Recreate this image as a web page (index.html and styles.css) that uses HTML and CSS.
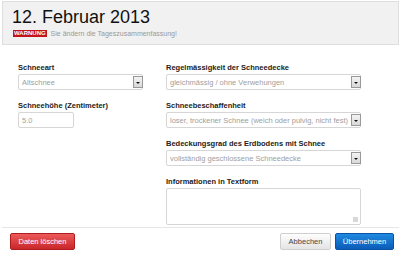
FILE: index.html
```html
<!DOCTYPE html>
<html lang="de">
<head>
  <meta charset="UTF-8">
  <title>Schnee | Tageszusammenfassung</title>
  <link rel="stylesheet" href="styles.css">
</head>
<body>
  <div class="header">
    <h1>12. Februar 2013</h1>
    <p class="warning"><span class="badge">WARNUNG</span> Sie ändern die Tageszusammenfassung!</p>
  </div>

  <div class="form">
    <div class="col col-left">
      <div class="field">
        <label>Schneeart</label>
        <div class="select"><span class="value">Altschnee</span><span class="arrow"></span></div>
      </div>
      <div class="field">
        <label>Schneehöhe (Zentimeter)</label>
        <div class="input small">5.0</div>
      </div>
    </div>

    <div class="col col-right">
      <div class="field">
        <label>Regelmässigkeit der Schneedecke</label>
        <div class="select"><span class="value">gleichmässig / ohne Verwehungen</span><span class="arrow"></span></div>
      </div>
      <div class="field">
        <label>Schneebeschaffenheit</label>
        <div class="select"><span class="value">loser, trockener Schnee (weich oder pulvig, nicht fest)</span><span class="arrow"></span></div>
      </div>
      <div class="field">
        <label>Bedeckungsgrad des Erdbodens mit Schnee</label>
        <div class="select"><span class="value">vollständig geschlossene Schneedecke</span><span class="arrow"></span></div>
      </div>
      <div class="field">
        <label>Informationen in Textform</label>
        <div class="textarea"><span class="grip"></span></div>
      </div>
    </div>
  </div>

  <div class="footer">
    <button class="btn btn-danger">Daten löschen</button>
    <div class="right-buttons">
      <button class="btn btn-default">Abbechen</button>
      <button class="btn btn-primary">Übernehmen</button>
    </div>
  </div>
</body>
</html>
```

FILE: styles.css
```css
body {
  font-family: 'Liberation Sans', Arial, sans-serif;
  background: #fff;
  margin: 0;
  color: #333;
  font-size: 7.5px;
}

.header {
  margin: 1px 1px 0 2px;
  padding: 5px 0 0 9px;
  box-sizing: border-box;
  height: 44px;
  background: #f1f1f1;
  border: 1px solid #dedede;
}

h1 {
  margin: 0;
  font-size: 18px;
  line-height: 20px;
  font-weight: normal;
  color: #111;
}

.warning {
  margin: 3px 0 0 1px;
  line-height: 8px;
  font-size: 7px;
  color: #999;
}

.badge {
  display: inline-block;
  background: #c3141c;
  color: #fff;
  font-weight: bold;
  font-size: 6px;
  line-height: 7px;
  padding: 0 1px;
  vertical-align: top;
  margin-right: 2px;
}

.form {
  display: flex;
  gap: 23px;
  padding: 18px 0 0 18px;
  height: 182px;
  box-sizing: border-box;
}

.col-left {
  width: 125px;
}

.col-right {
  width: 195px;
}

.field {
  margin-bottom: 11px;
}

label {
  display: block;
  font-weight: bold;
  line-height: 9px;
  margin-bottom: 2px;
  color: #222;
}

.select, .input, .textarea {
  box-sizing: border-box;
  height: 16px;
  border: 1px solid #d6d6d6;
  border-radius: 2px;
  color: #a0a0a0;
  display: flex;
  align-items: center;
  padding-left: 3px;
  background: #fff;
}

.select .value {
  flex: 1;
  white-space: nowrap;
  overflow: hidden;
}

.arrow {
  width: 10px;
  height: 12px;
  box-sizing: border-box;
  border: 1px solid #999;
  background: linear-gradient(#f4f4f4, #d8d8d8);
  display: flex;
  align-items: center;
  justify-content: center;
  margin-right: -1px;
}

.arrow::after {
  content: "";
  border-left: 2px solid transparent;
  border-right: 2px solid transparent;
  border-top: 2px solid #111;
  margin-top: 2px;
}

.input.small {
  width: 56px;
}

.textarea {
  height: 37px;
  position: relative;
}

.grip {
  position: absolute;
  right: 2px;
  bottom: 2px;
  width: 5px;
  height: 5px;
  background: radial-gradient(circle, #aaa 0.6px, transparent 0.8px) 0 0 / 2px 2px;
}

.footer {
  margin: 0 1px 0 2px;
  border-top: 1px solid #e6e6e6;
  padding: 5px 5px 0 8px;
  display: flex;
  justify-content: space-between;
}

.right-buttons {
  display: flex;
  gap: 4px;
}

.btn {
  font-family: 'Liberation Sans', Arial, sans-serif;
  font-size: 7.5px;
  height: 17px;
  padding: 0 4px;
  border-radius: 2px;
  cursor: pointer;
}

.btn-danger {
  width: 65px;
  background: linear-gradient(#ec5a5a, #c9272a);
  border: 1px solid #b01d20;
  color: #fff;
}

.btn-default {
  width: 51px;
  background: linear-gradient(#fefefe, #e4e4e4);
  border: 1px solid #cfcfcf;
  color: #444;
}

.btn-primary {
  width: 59px;
  background: linear-gradient(#1f8ae0, #0b5cb8);
  border: 1px solid #0a52a4;
  color: #fff;
}
```
